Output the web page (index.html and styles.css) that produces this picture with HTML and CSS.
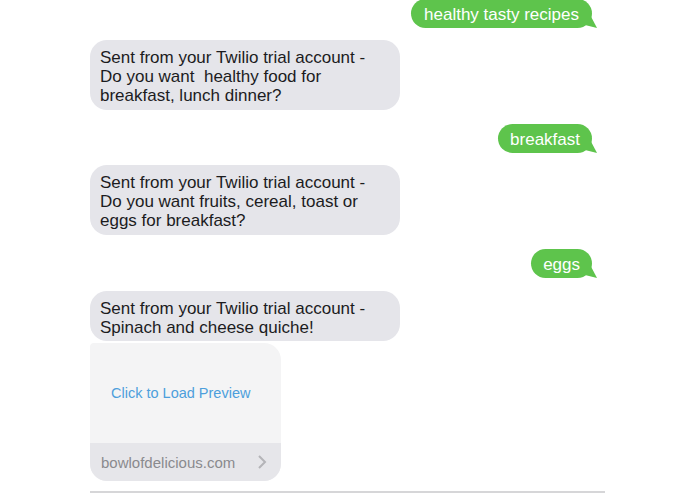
FILE: index.html
```html
<!DOCTYPE html>
<html lang="en">
<head>
  <meta charset="UTF-8">
  <title>Messages</title>
  <link rel="stylesheet" href="styles.css">
</head>
<body>
  <div class="thread">
    <div class="msg sent first">healthy tasty recipes</div>
    <div class="msg received">Sent from your Twilio trial account -<br>Do you want&nbsp; healthy food for<br>breakfast, lunch dinner?</div>
    <div class="msg sent">breakfast</div>
    <div class="msg received">Sent from your Twilio trial account -<br>Do you want fruits, cereal, toast or<br>eggs for breakfast?</div>
    <div class="msg sent">eggs</div>
    <div class="msg received last">Sent from your Twilio trial account -<br>Spinach and cheese quiche!</div>
    <div class="preview">
      <div class="preview-body">Click to Load Preview</div>
      <div class="preview-foot">
        <span>bowlofdelicious.com</span>
        <svg width="10" height="16" viewBox="0 0 10 16"><path d="M2 2 L8 8 L2 14" fill="none" stroke="#b4b4b8" stroke-width="2"/></svg>
      </div>
    </div>
    <div class="divider"></div>
  </div>
</body>
</html>
```

FILE: styles.css
```css
* {
  margin: 0;
  padding: 0;
  box-sizing: border-box;
}

body {
  font-family: 'Liberation Sans', Arial, sans-serif;
  background: #fff;
  color: #1c1c1e;
  width: 695px;
  height: 494px;
  overflow: hidden;
}

.thread {
  display: flex;
  flex-direction: column;
  width: 515px;
  margin-left: 90px;
}

.msg {
  font-size: 17px;
  line-height: 19px;
  border-radius: 17px;
  position: relative;
}

.sent {
  align-self: flex-end;
  margin-right: 13px;
  background: #5ec44c;
  color: #fff;
  padding: 6px 12px 4px;
  margin-top: 14px;
}

.sent.first {
  margin-top: -1px;
  padding: 6px 13px 4px;
}

.sent::after {
  content: "";
  position: absolute;
  right: -5px;
  bottom: 0;
  width: 14px;
  height: 12px;
  background: #5ec44c;
  clip-path: polygon(0 0, 55% 0, 100% 100%, 0 70%);
}

.received {
  align-self: flex-start;
  width: 310px;
  background: #e5e5ea;
  padding: 8px 10px 5px;
  margin-top: 12px;
}

.received.last {
  margin-top: 13px;
  padding: 8px 10px 4px;
}

.preview {
  width: 191px;
  margin-top: 2px;
  border-radius: 4px 17px 17px 17px;
  overflow: hidden;
  background: #f4f4f5;
}

.preview-body {
  height: 100px;
  display: flex;
  align-items: center;
  padding-left: 21px;
  font-size: 14.5px;
  color: #4d9fdc;
}

.preview-foot {
  height: 38px;
  background: #e6e6ea;
  display: flex;
  align-items: center;
  justify-content: space-between;
  padding: 0 14px 0 11px;
  font-size: 15px;
  color: #8a8a8e;
}

.divider {
  margin-top: 10px;
  height: 2px;
  background: #d6d6d8;
}
```
